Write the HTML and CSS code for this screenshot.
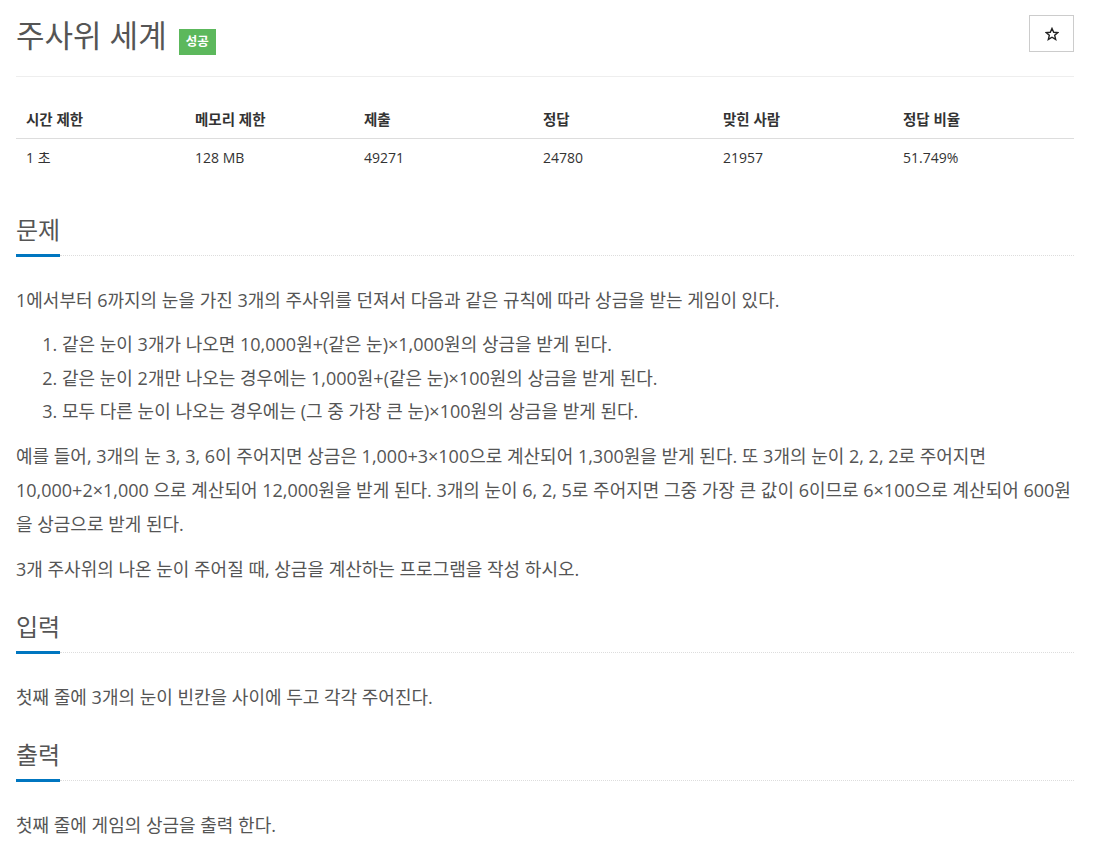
FILE: index.html
```html
<!DOCTYPE html>
<html lang="ko">
<head>
<meta charset="utf-8">
<title>주사위 세계</title>
<link rel="stylesheet" href="styles.css">
</head>
<body>
<div class="page">
  <div class="page-header">
    <div class="title-group">
      <h1 class="title">주사위 세계</h1>
      <span class="badge">성공</span>
    </div>
    <button class="star-btn" type="button" aria-label="즐겨찾기">
      <svg width="14" height="14" viewBox="0 0 24 24"><polygon points="12,2.5 14.9,9.1 22,9.6 16.6,14.3 18.3,21.3 12,17.5 5.7,21.3 7.4,14.3 2,9.6 9.1,9.1" fill="none" stroke="#222" stroke-width="2.4" stroke-linejoin="miter"/></svg>
    </button>
  </div>

  <table class="info">
    <thead>
      <tr><th class="c1">시간 제한</th><th class="c2">메모리 제한</th><th class="c3">제출</th><th class="c4">정답</th><th class="c5">맞힌 사람</th><th class="c6">정답 비율</th></tr>
    </thead>
    <tbody>
      <tr><td>1 초</td><td>128 MB</td><td>49271</td><td>24780</td><td>21957</td><td>51.749%</td></tr>
    </tbody>
  </table>

  <section class="section first">
    <div class="headline"><h2>문제</h2><span class="dots"></span></div>
    <div class="text">
      <p>1에서부터 6까지의 눈을 가진 3개의 주사위를 던져서 다음과 같은 규칙에 따라 상금을 받는 게임이 있다.</p>
      <ol>
        <li>같은 눈이 3개가 나오면 10,000원+(같은 눈)×1,000원의 상금을 받게 된다.</li>
        <li>같은 눈이 2개만 나오는 경우에는 1,000원+(같은 눈)×100원의 상금을 받게 된다.</li>
        <li>모두 다른 눈이 나오는 경우에는 (그 중 가장 큰 눈)×100원의 상금을 받게 된다.</li>
      </ol>
      <p>예를 들어, 3개의 눈 3, 3, 6이 주어지면 상금은 1,000+3×100으로 계산되어 1,300원을 받게 된다. 또 3개의 눈이 2, 2, 2로 주어지면 10,000+2×1,000 으로 계산되어 12,000원을 받게 된다. 3개의 눈이 6, 2, 5로 주어지면 그중 가장 큰 값이 6이므로 6×100으로 계산되어 600원을 상금으로 받게 된다.</p>
      <p>3개 주사위의 나온 눈이 주어질 때, 상금을 계산하는 프로그램을 작성 하시오.</p>
    </div>
  </section>

  <section class="section">
    <div class="headline"><h2>입력</h2><span class="dots"></span></div>
    <div class="text">
      <p>첫째 줄에 3개의 눈이 빈칸을 사이에 두고 각각 주어진다.</p>
    </div>
  </section>

  <section class="section">
    <div class="headline"><h2>출력</h2><span class="dots"></span></div>
    <div class="text">
      <p>첫째 줄에 게임의 상금을 출력 한다.</p>
    </div>
  </section>
</div>
</body>
</html>
```

FILE: styles.css
```css
* { box-sizing: border-box; }
html, body { margin: 0; padding: 0; background: #fff; }
body {
  font-family: "Open Sans", "Noto Sans CJK KR", sans-serif;
  color: #333;
}
.page {
  width: 1058px;
  margin-left: 16px;
}
.page-header {
  display: flex;
  justify-content: space-between;
  align-items: flex-start;
  padding-top: 15px;
  padding-bottom: 21px;
  border-bottom: 1px solid #eee;
}
.title-group {
  display: flex;
  align-items: flex-start;
}
.title {
  margin: 0;
  font-size: 31px;
  line-height: 40px;
  font-weight: 400;
  color: #555;
}
.badge {
  margin-left: 12px;
  margin-top: 14px;
  height: 26px;
  padding: 0 7px;
  background: #5cb85c;
  color: #fff;
  font-size: 12.5px;
  font-weight: 700;
  line-height: 26px;
}
.star-btn {
  width: 45px;
  height: 37px;
  border: 1px solid #ccc;
  background: #fff;
  border-radius: 0;
  padding: 0;
  display: flex;
  align-items: center;
  justify-content: center;
}
.info {
  width: 100%;
  margin-top: 25px;
  border-collapse: collapse;
  font-size: 14px;
}
.info th, .info td {
  text-align: left;
  padding: 8px 10px;
  line-height: 20px;
}
.info th {
  font-size: 14.5px;
  font-weight: 700;
  border-bottom: 1px solid #ddd;
}
.info td {
  padding-top: 9px;
  padding-bottom: 7px;
}
.c1, .c2 { width: 169px; }
.c3 { width: 179px; }
.c4, .c5 { width: 180px; }
.c6 { width: 181px; }
.section { margin-top: 24px; }
.section.first { margin-top: 38px; }
.headline {
  display: flex;
  align-items: flex-end;
}
.headline h2 {
  margin: 0;
  font-size: 24px;
  font-weight: 400;
  line-height: 34px;
  color: #555;
  padding-bottom: 7px;
  border-bottom: 3px solid #0076c0;
}
.dots {
  flex: 1;
  border-bottom: 1px dotted #ddd;
  margin-bottom: 1px;
}
.text {
  padding-top: 26px;
  font-size: 18px;
  line-height: 34px;
  color: #555;
}
.text p { margin: 0 0 11px; }
.text p:last-child { margin-bottom: 0; }
.text ol {
  margin: 0 0 10px;
  padding-left: 46px;
}
.text li { line-height: 33.5px; }
```
